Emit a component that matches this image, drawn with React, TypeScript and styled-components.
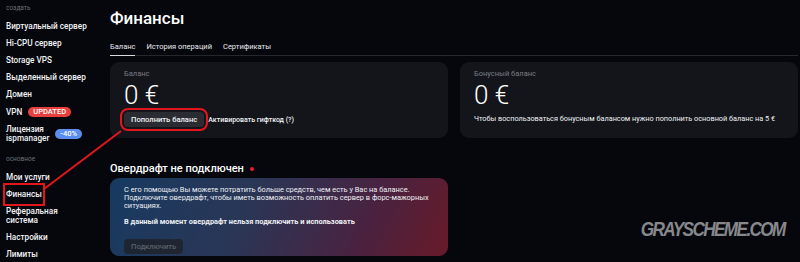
import React from "react";
import styled, { createGlobalStyle } from "styled-components";

const GlobalStyle = createGlobalStyle`
  html, body {
    margin: 0;
    padding: 0;
    background: #05070d;
    font-family: Roboto, "Noto Sans", sans-serif;
    color: #ffffff;
    overflow: hidden;
  }
`;

const Page = styled.div`
  position: relative;
  display: flex;
  width: 800px;
  height: 262px;
  overflow: hidden;
`;

const Sidebar = styled.nav`
  width: 104px;
  flex-shrink: 0;
  padding: 4px 0 0 6px;
  box-sizing: border-box;
`;

const SectionLabel = styled.div<{ $top?: number }>`
  font-size: 6.5px;
  color: #6d7078;
  line-height: 9px;
  margin-top: ${(p) => p.$top ?? 0}px;
  margin-bottom: 5px;
`;

const NavItem = styled.div<{ $marked?: boolean }>`
  display: flex;
  align-items: center;
  gap: 6px;
  font-size: 8.2px;
  font-weight: 500;
  line-height: 9px;
  padding: 4px 0;
  color: #f2f3f5;
  white-space: nowrap;
  width: fit-content;
  outline: ${(p) => (p.$marked ? "2px solid #e3161e" : "none")};
  outline-offset: 1.5px;
`;

const Badge = styled.span<{ $color: string }>`
  background: ${(p) => p.$color};
  color: #fff;
  font-size: 7.5px;
  font-weight: 500;
  line-height: 10px;
  padding: 0 5px;
  border-radius: 6px;
`;

const Main = styled.main`
  flex: 1;
  padding: 6px 2px 0 6px;
  min-width: 0;
`;

const Title = styled.h1`
  margin: 0;
  font-size: 17px;
  font-weight: 500;
  line-height: 24px;
`;

const Tabs = styled.div`
  display: flex;
  gap: 11px;
  margin-top: 12px;
  border-bottom: 1px solid #25272c;
`;

const Tab = styled.div<{ $active?: boolean }>`
  font-size: 7.5px;
  line-height: 10px;
  padding: 0 0 3px;
  color: #e9eaed;
  border-bottom: 1px solid ${(p) => (p.$active ? "#d9dade" : "transparent")};
  margin-bottom: -1px;
`;

const Cards = styled.div`
  display: grid;
  grid-template-columns: 1fr 1fr;
  gap: 12px;
  margin-top: 6px;
`;

const Card = styled.div`
  background: #13151a;
  border-radius: 9px;
  padding: 7px 14px 8px;
  height: 76px;
  box-sizing: border-box;
`;

const CardLabel = styled.div`
  font-size: 7.5px;
  line-height: 10px;
  color: #7a7d84;
`;

const Amount = styled.div`
  font-size: 26px;
  font-weight: 300;
  line-height: 26px;
  margin-top: 3px;
`;

const ActionRow = styled.div`
  display: flex;
  align-items: center;
  gap: 4px;
  margin-top: 4px;
`;

const Button = styled.button<{ $marked?: boolean; $disabled?: boolean }>`
  font-family: inherit;
  font-size: 7.6px;
  font-weight: 500;
  line-height: 15px;
  padding: 0 7px;
  border: none;
  border-radius: 4px;
  background: ${(p) => (p.$disabled ? "rgba(30, 34, 42, 0.85)" : "#2a2c31")};
  color: ${(p) => (p.$disabled ? "#5b6069" : "#f1f2f4")};
  outline: ${(p) => (p.$marked ? "2px solid #e3161e" : "none")};
  outline-offset: 2px;
`;

const LinkText = styled.span`
  font-size: 7px;
  font-weight: 500;
  color: #f1f2f4;
`;

const Note = styled.div`
  font-size: 7.3px;
  line-height: 10px;
  margin-top: 6px;
  color: #f1f2f4;
  white-space: nowrap;
`;

const SectionTitle = styled.div`
  display: flex;
  align-items: center;
  gap: 6px;
  font-size: 11px;
  line-height: 14px;
  font-weight: 500;
  margin-top: 24px;
`;

const Dot = styled.span`
  width: 4px;
  height: 4px;
  border-radius: 50%;
  background: #f0163a;
`;

const Overdraft = styled.div`
  width: 338px;
  margin-top: 2px;
  border-radius: 9px;
  padding: 8px 14px 8px;
  box-sizing: border-box;
  height: 78px;
  background: linear-gradient(115deg, #173a61 0%, #2a3656 40%, #4a2240 75%, #681a28 100%);
`;

const OverText = styled.p<{ $bold?: boolean }>`
  margin: 0 0 ${(p) => (p.$bold ? 8 : 7)}px;
  font-size: 7.4px;
  line-height: 8.2px;
  font-weight: ${(p) => (p.$bold ? 700 : 400)};
  color: #eef0f4;
`;

const Watermark = styled.div`
  position: absolute;
  right: 15px;
  top: 217px;
  font-family: "Liberation Sans", Arial, sans-serif;
  font-size: 21px;
  font-weight: 700;
  font-style: italic;
  letter-spacing: -2px;
  color: #87888c;
  transform: scaleX(0.82);
  transform-origin: right center;
`;

const Annotation = styled.svg`
  position: absolute;
  left: 0;
  top: 0;
  pointer-events: none;
`;

export default function App() {
  return (
    <Page>
      <GlobalStyle />
      <Sidebar>
        <SectionLabel>создать</SectionLabel>
        <NavItem>Виртуальный сервер</NavItem>
        <NavItem>Hi-CPU сервер</NavItem>
        <NavItem>Storage VPS</NavItem>
        <NavItem>Выделенный сервер</NavItem>
        <NavItem>Домен</NavItem>
        <NavItem>
          VPN <Badge $color="#e8403d">UPDATED</Badge>
        </NavItem>
        <NavItem>
          <span>
            Лицензия
            <br />
            ispmanager
          </span>
          <Badge $color="#5b8ef0">-40%</Badge>
        </NavItem>
        <SectionLabel $top={8}>основное</SectionLabel>
        <NavItem>Мои услуги</NavItem>
        <NavItem $marked>Финансы</NavItem>
        <NavItem>
          Реферальная
          <br />
          система
        </NavItem>
        <NavItem>Настройки</NavItem>
        <NavItem>Лимиты</NavItem>
      </Sidebar>
      <Main>
        <Title>Финансы</Title>
        <Tabs>
          <Tab $active>Баланс</Tab>
          <Tab>История операций</Tab>
          <Tab>Сертификаты</Tab>
        </Tabs>
        <Cards>
          <Card>
            <CardLabel>Баланс</CardLabel>
            <Amount>0 €</Amount>
            <ActionRow>
              <Button $marked>Пополнить баланс</Button>
              <LinkText>Активировать гифткод (?)</LinkText>
            </ActionRow>
          </Card>
          <Card>
            <CardLabel>Бонусный баланс</CardLabel>
            <Amount>0 €</Amount>
            <Note>
              Чтобы воспользоваться бонусным балансом нужно пополнить основной
              баланс на 5 €
            </Note>
          </Card>
        </Cards>
        <SectionTitle>
          Овердрафт не подключен <Dot />
        </SectionTitle>
        <Overdraft>
          <OverText>
            С его помощью Вы можете потратить больше средств, чем есть у Вас на
            балансе.
            <br />
            Подключите овердрафт, чтобы иметь возможность оплатить сервер в
            форс-мажорных ситуациях.
          </OverText>
          <OverText $bold>
            В данный момент овердрафт нельзя подключить и использовать
          </OverText>
          <Button $disabled>Подключить</Button>
        </Overdraft>
      </Main>
      <Watermark>GRAYSCHEME.COM</Watermark>
      <Annotation width="800" height="262">
        <line x1="44" y1="189" x2="121" y2="131" stroke="#e3161e" strokeWidth="2" />
      </Annotation>
    </Page>
  );
}
